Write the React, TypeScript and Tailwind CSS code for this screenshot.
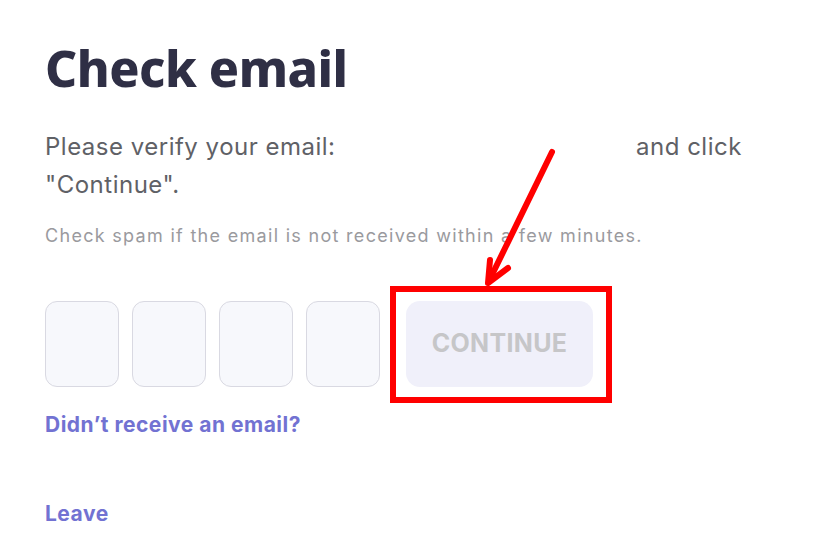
import React from 'react';

// Verification code screen with annotation overlay
export default function App() {
  const boxes = [0, 1, 2, 3];

  return (
    <div className="relative w-[831px] h-[539px] bg-white overflow-hidden" style={{ fontFamily: 'Inter, "Noto Sans", sans-serif' }}>
      <div className="pl-[45px] pt-[38px]">
        <h1
          className="text-[50px] leading-[60px] font-extrabold text-[#2f2f45] tracking-[-0.5px]"
          style={{ fontFamily: '"Noto Sans", "Open Sans", sans-serif' }}
        >
          Check email
        </h1>

        <p className="mt-[30px] w-[740px] text-[24px] leading-[38px] tracking-[0.5px] text-[#5f6166]">
          Please verify your email: <span className="inline-block w-[286px]" /> and click "Continue".
        </p>

        <p className="mt-[20px] text-[18px] leading-[24px] tracking-[1.3px] text-[#9a9a9e]">
          Check spam if the email is not received within a few minutes.
        </p>

        <div className="mt-[53px] flex items-center">
          <div className="flex gap-[13px]">
            {boxes.map((b) => (
              <div key={b} className="w-[74px] h-[86px] rounded-[12px] border-[1.5px] border-[#d9d9e2] bg-[#f7f8fc]" />
            ))}
          </div>
          <div className="relative ml-[26px]">
            <button className="w-[187px] h-[86px] rounded-[14px] bg-[#f0f0fa] text-[25px] font-bold text-[#c6c6c8] tracking-[0.3px]">
              CONTINUE
            </button>
            {/* red annotation frame */}
            <div className="absolute left-[-16px] top-[-15px] w-[222px] h-[117px] border-[6px] border-[#ff0000]" />
          </div>
        </div>

        <p className="mt-[24px] text-[21px] leading-[28px] font-bold tracking-[0.5px] text-[#7272d2]">
          Didn’t receive an email?
        </p>

        <p className="mt-[61px] text-[21px] leading-[28px] font-bold tracking-[0.5px] text-[#7272d2]">
          Leave
        </p>
      </div>

      {/* red annotation arrow */}
      <svg className="absolute left-0 top-0" width="831" height="539" viewBox="0 0 831 539" fill="none">
        <path d="M552 152 L489 281" stroke="#ff0000" strokeWidth="6" strokeLinecap="round" />
        <path d="M490 260 L488 283 L508 268" stroke="#ff0000" strokeWidth="6" strokeLinecap="round" strokeLinejoin="round" />
      </svg>
    </div>
  );
}
